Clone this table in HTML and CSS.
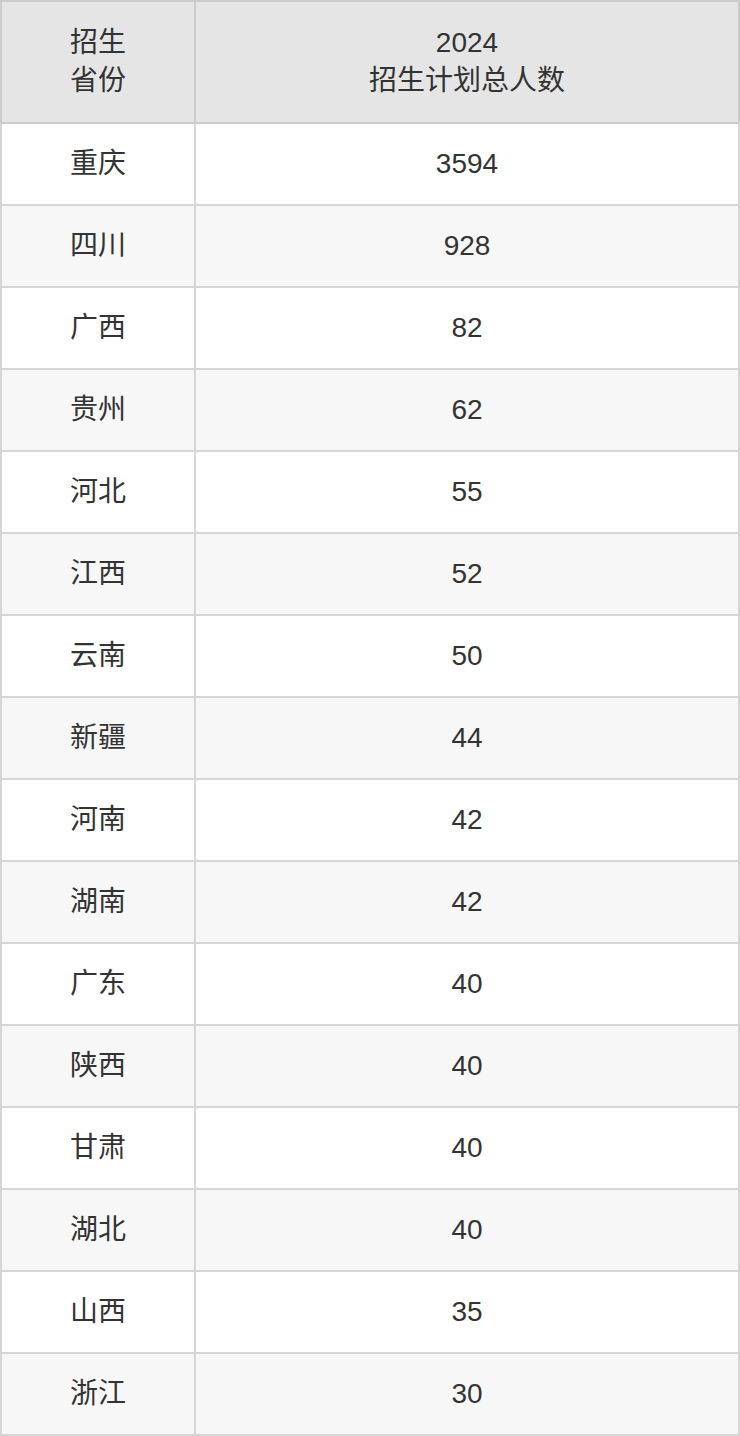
FILE: index.html
```html
<!DOCTYPE html>
<html lang="zh">
<head>
<meta charset="utf-8">
<link rel="stylesheet" href="styles.css">
</head>
<body>
<table class="plan">
  <colgroup><col class="c1"><col class="c2"></colgroup>
  <thead>
    <tr><th>招生<br>省份</th><th>2024<br>招生计划总人数</th></tr>
  </thead>
  <tbody>
    <tr><td>重庆</td><td>3594</td></tr>
    <tr><td>四川</td><td>928</td></tr>
    <tr><td>广西</td><td>82</td></tr>
    <tr><td>贵州</td><td>62</td></tr>
    <tr><td>河北</td><td>55</td></tr>
    <tr><td>江西</td><td>52</td></tr>
    <tr><td>云南</td><td>50</td></tr>
    <tr><td>新疆</td><td>44</td></tr>
    <tr><td>河南</td><td>42</td></tr>
    <tr><td>湖南</td><td>42</td></tr>
    <tr><td>广东</td><td>40</td></tr>
    <tr><td>陕西</td><td>40</td></tr>
    <tr><td>甘肃</td><td>40</td></tr>
    <tr><td>湖北</td><td>40</td></tr>
    <tr><td>山西</td><td>35</td></tr>
    <tr><td>浙江</td><td>30</td></tr>
  </tbody>
</table>
</body>
</html>
```
FILE: styles.css
```css
html, body {
  margin: 0;
  padding: 0;
  background: #ffffff;
}
.plan {
  width: 740px;
  border-collapse: collapse;
  table-layout: fixed;
  font-family: "Liberation Sans", "Noto Sans CJK SC", sans-serif;
  font-size: 28px;
  color: #333333;
}
.c1 { width: 194px; }
.plan th, .plan td {
  border: 2px solid #d6d6d6;
  text-align: center;
  vertical-align: middle;
  padding: 0;
  font-weight: normal;
}
.plan th {
  background: #e5e5e5;
  height: 120px;
  line-height: 38px;
  border-color: #cccccc;
}
.plan td {
  height: 80px;
  line-height: 30px;
}
.plan tbody tr:nth-child(even) td {
  background: #f7f7f7;
}
```
